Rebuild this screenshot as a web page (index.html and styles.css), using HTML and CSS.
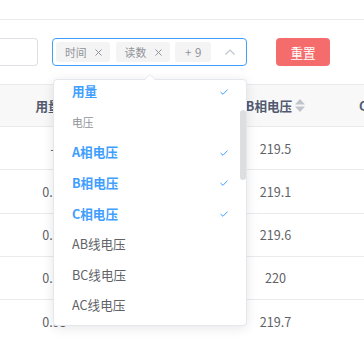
FILE: index.html
```html
<!DOCTYPE html>
<html lang="zh">
<head>
<meta charset="utf-8">
<title>筛选</title>
<link rel="stylesheet" href="styles.css">
</head>
<body>
<div class="page">
  <div class="topbar"></div>
  <div class="filters">
    <div class="input"></div>
    <div class="select">
      <span class="tag">时间<svg class="tag-close" viewBox="0 0 9 9"><path d="M1.5 1.5L7.5 7.5M7.5 1.5L1.5 7.5"/></svg></span>
      <span class="tag">读数<svg class="tag-close" viewBox="0 0 9 9"><path d="M1.5 1.5L7.5 7.5M7.5 1.5L1.5 7.5"/></svg></span>
      <span class="tag tag-count">+ 9</span>
      <svg class="arrow" viewBox="0 0 10 6"><polyline points="0.5,5.5 5,1 9.5,5.5"/></svg>
    </div>
    <button class="btn-reset">重置</button>
  </div>
  <div class="table">
    <div class="row thead">
      <div class="cell c1">用量<svg class="sort" viewBox="0 0 10 13"><polygon points="5,0 10,5.5 0,5.5"/><polygon points="0,7.5 10,7.5 5,13"/></svg></div>
      <div class="cell c2">A相电压<svg class="sort" viewBox="0 0 10 13"><polygon points="5,0 10,5.5 0,5.5"/><polygon points="0,7.5 10,7.5 5,13"/></svg></div>
      <div class="cell c3">B相电压<svg class="sort" viewBox="0 0 10 13"><polygon points="5,0 10,5.5 0,5.5"/><polygon points="0,7.5 10,7.5 5,13"/></svg></div>
      <div class="cell c4">C相电压<svg class="sort" viewBox="0 0 10 13"><polygon points="5,0 10,5.5 0,5.5"/><polygon points="0,7.5 10,7.5 5,13"/></svg></div>
    </div>
    <div class="row"><div class="cell c1">--</div><div class="cell c2"></div><div class="cell c3">219.5</div><div class="cell c4">219.8</div></div>
    <div class="row"><div class="cell c1">0.93</div><div class="cell c2"></div><div class="cell c3">219.1</div><div class="cell c4">219.4</div></div>
    <div class="row"><div class="cell c1">0.88</div><div class="cell c2"></div><div class="cell c3">219.6</div><div class="cell c4">219.9</div></div>
    <div class="row"><div class="cell c1">0.91</div><div class="cell c2"></div><div class="cell c3">220</div><div class="cell c4">220.1</div></div>
    <div class="row"><div class="cell c1">0.95</div><div class="cell c2"></div><div class="cell c3">219.7</div><div class="cell c4">219.6</div></div>
  </div>

  <div class="dropdown">
    <div class="dropdown-scroll">
      <ul class="options">
        <li class="option selected"><span>用量</span><svg class="check" viewBox="0 0 8 6"><polyline points="0.5,3 3,5.3 7.5,0.6"/></svg></li>
        <li class="group-title">电压</li>
        <li class="option selected"><span>A相电压</span><svg class="check" viewBox="0 0 8 6"><polyline points="0.5,3 3,5.3 7.5,0.6"/></svg></li>
        <li class="option selected"><span>B相电压</span><svg class="check" viewBox="0 0 8 6"><polyline points="0.5,3 3,5.3 7.5,0.6"/></svg></li>
        <li class="option selected"><span>C相电压</span><svg class="check" viewBox="0 0 8 6"><polyline points="0.5,3 3,5.3 7.5,0.6"/></svg></li>
        <li class="option"><span>AB线电压</span></li>
        <li class="option"><span>BC线电压</span></li>
        <li class="option"><span>AC线电压</span></li>
        <li class="group-title">电流</li>
      </ul>
    </div>
    <div class="scroll-thumb"></div>
  </div>
</div>
</body>
</html>
```
FILE: styles.css
```css
* { box-sizing: border-box; }
html, body { margin: 0; padding: 0; background: #fff; }
body {
  font-family: "Noto Sans CJK SC", "Noto Sans", sans-serif;
  font-size: 12.6px;
  color: #606266;
}
.page {
  position: relative;
  width: 364px;
  height: 342px;
  overflow: hidden;
}
.topbar {
  height: 20px;
  border-bottom: 1px solid #e8eaec;
}
.filters {
  display: flex;
  align-items: center;
  padding: 18px 0;
}
.input {
  flex: none;
  width: 38px;
  height: 28px;
  border: 1px solid #dcdfe6;
  border-left: 0;
  border-radius: 0 4px 4px 0;
}
.select {
  flex: none;
  margin-left: 14px;
  width: 195px;
  height: 28px;
  border: 1px solid #409eff;
  border-radius: 4px;
  display: flex;
  align-items: center;
  padding-left: 3px;
}
.tag {
  flex: none;
  display: inline-flex;
  align-items: center;
  height: 20px;
  padding: 0 7px 0 9px;
  margin-right: 5.5px;
  background: #f4f4f5;
  border-radius: 3px;
  color: #909399;
  font-size: 10.8px;
  line-height: 20px;
}
.tag-close {
  width: 9px;
  height: 9px;
  margin-left: 7.5px;
  fill: none;
  stroke: #909399;
  stroke-width: 1;
}
.tag-count {
  width: 36px;
  padding: 0;
  justify-content: center;
  font-size: 11.5px;
  word-spacing: 1px;
}
.arrow {
  width: 10px;
  height: 6px;
  margin-left: auto;
  margin-right: 11px;
  fill: none;
  stroke: #c0c4cc;
  stroke-width: 1.2;
}
.btn-reset {
  flex: none;
  margin-left: 29px;
  width: 54px;
  height: 28px;
  border: 0;
  border-radius: 4px;
  background: #f56c6c;
  color: #fff;
  font-family: inherit;
  font-size: 12.6px;
  padding: 0;
}
.table {
  width: 446px;
  border-top: 1px solid #e8eaec;
}
.row {
  display: flex;
  height: 43.25px;
  border-bottom: 1px solid #e8eaec;
}
.thead {
  height: 42px;
  background: #f8f8f9;
  color: #515a6e;
  font-weight: bold;
}
.cell {
  flex: none;
  display: flex;
  align-items: center;
  justify-content: center;
}
.c1 { width: 109px; }
.c2 { width: 111px; }
.c3 { width: 111px; }
.c4 { width: 115px; }
.sort {
  width: 10px;
  height: 13px;
  margin-left: 3px;
  fill: #c0c4cc;
}
.dropdown {
  position: absolute;
  left: 53px;
  top: 79px;
  width: 194px;
  height: 247px;
  background: #fff;
  border: 1px solid #e4e7ed;
  border-radius: 4px;
  box-shadow: 0 2px 12px 0 rgba(0, 0, 0, 0.1);
}
.dropdown::before,
.dropdown::after {
  content: "";
  position: absolute;
  left: 90px;
  border: 6px solid transparent;
  border-top: 0;
}
.dropdown::before {
  top: -6px;
  border-bottom-color: #e4e7ed;
}
.dropdown::after {
  top: -5px;
  border-bottom-color: #fff;
}
.dropdown-scroll {
  height: 100%;
  overflow: hidden;
  border-radius: 4px;
}
.options {
  list-style: none;
  margin: -3.8px 0 0;
  padding: 0;
}
.option,
.group-title {
  height: 30.6px;
  line-height: 30.6px;
  padding: 0 18px;
}
.option {
  display: flex;
  align-items: center;
  justify-content: space-between;
  color: #606266;
  font-size: 12.6px;
}
.option.selected {
  color: #409eff;
  font-weight: bold;
}
.group-title {
  color: #909399;
  font-size: 10.8px;
}
.check {
  width: 8px;
  height: 6px;
  fill: none;
  stroke: #409eff;
  stroke-width: 1;
}
.scroll-thumb {
  position: absolute;
  right: 0;
  top: 30px;
  width: 6px;
  height: 70px;
  border-radius: 3px;
  background: #dddee0;
}
```
